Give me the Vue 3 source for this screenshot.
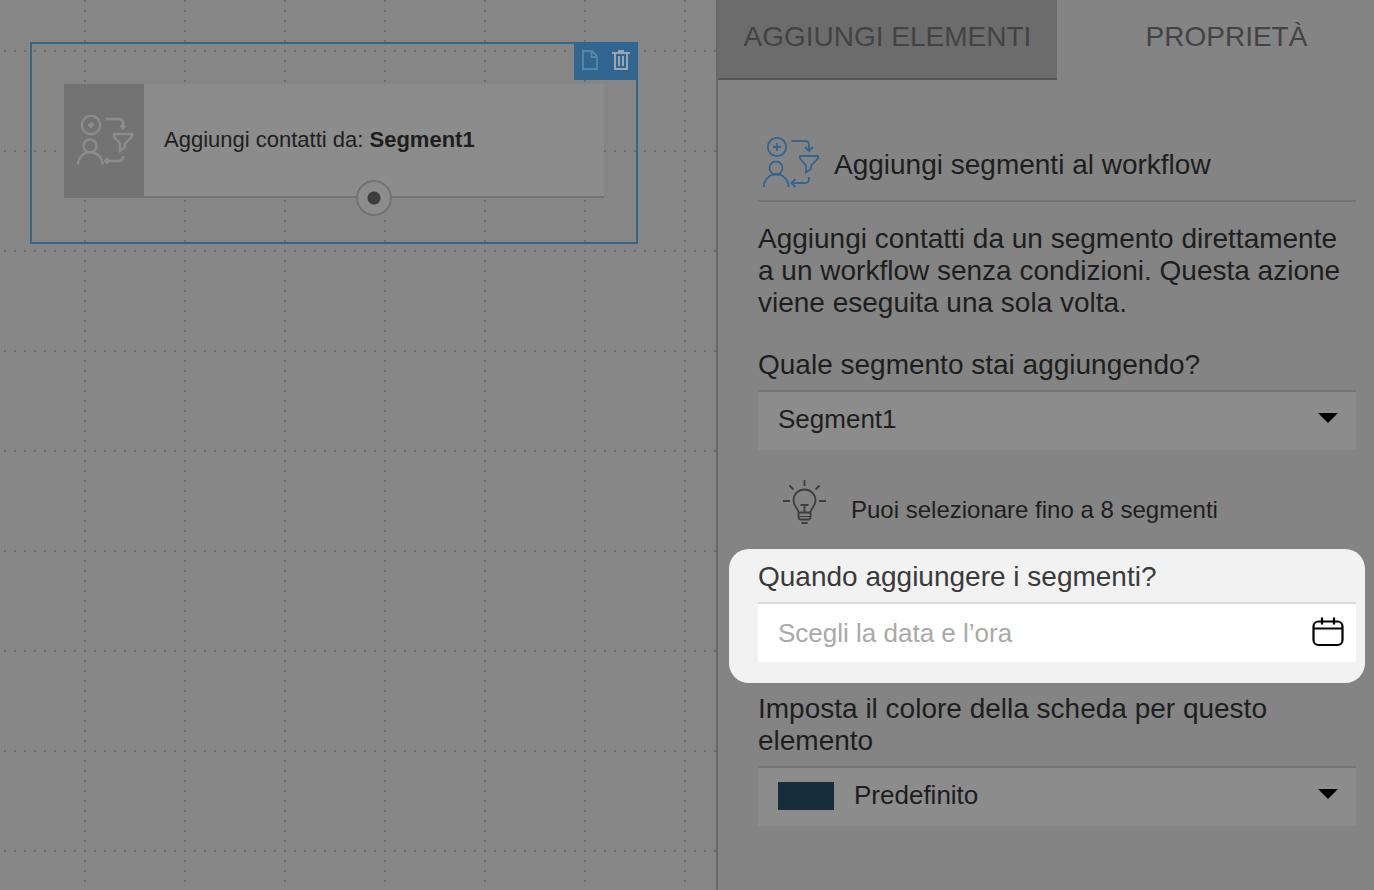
<script setup>
import { ref } from 'vue'

const segment = ref('Segment1')
const color = ref('Predefinito')
const date = ref('')
</script>

<template>
  <div class="editor">
    <main class="canvas">
      <svg class="dots" width="100%" height="100%" aria-hidden="true">
        <defs>
          <pattern id="grid-dots" width="100" height="100" patternUnits="userSpaceOnUse" x="80" y="46">
            <path d="M5 5h.01M15 5h.01M25 5h.01M35 5h.01M45 5h.01M55 5h.01M65 5h.01M75 5h.01M85 5h.01M95 5h.01M5 15h.01M5 25h.01M5 35h.01M5 45h.01M5 55h.01M5 65h.01M5 75h.01M5 85h.01M5 95h.01" stroke="#646464" stroke-width="2.2" stroke-linecap="round" />
          </pattern>
        </defs>
        <rect width="100%" height="100%" fill="url(#grid-dots)" />
      </svg>

      <section class="node">
        <div class="node-tools">
          <button type="button" aria-label="Duplica">
            <svg width="16" height="20" viewBox="0 0 16 20" fill="none" stroke="#5c86a3" stroke-width="1.8">
              <path d="M1 1h9l5 5.500V19H1z" /><path d="M9.500 1v6H15" />
            </svg>
          </button>
          <button type="button" aria-label="Elimina">
            <svg width="18" height="20" viewBox="0 0 18 20" fill="none" stroke="#9aa5ad" stroke-width="2">
              <path d="M0 3h18M6 1h6M3 3v16h12V3M7 6v10M11 6v10" />
            </svg>
          </button>
        </div>
        <div class="card">
          <div class="card-icon">
            <svg width="58" height="52" viewBox="0 0 58 52" fill="none" stroke="#8c8c8c" stroke-width="2.4">
              <circle cx="14" cy="10" r="9.200" />
              <path d="M14 7l3 3-3 3-3-3z" fill="#8c8c8c" stroke-width="1" />
              <path d="M29 4h13q4 0 4 4v3" />
              <path d="M46 14.500l-3-3 3-2 3 2z" fill="#8c8c8c" stroke-width="1" />
              <path d="M37 19h18v2.500l-7 7v3.500l-5 4v-7.500l-6-7z" />
              <path d="M46 41v1q0 4-4 4H31" />
              <path d="M27 46l3.500-3 2.500 3-2.500 3z" fill="#8c8c8c" stroke-width="1" />
              <circle cx="13" cy="31" r="6.500" />
              <path d="M1 49.500a12.200 12.200 0 0 1 24.500 0" />
            </svg>
          </div>
          <div class="card-body">
            <p>Aggiungi contatti da: <strong>Segment1</strong></p>
            <span class="port"></span>
          </div>
        </div>
      </section>
    </main>

    <aside class="panel">
      <nav class="tabs">
        <button type="button" class="tab tab-add">AGGIUNGI ELEMENTI</button>
        <button type="button" class="tab tab-props">PROPRIETÀ</button>
      </nav>

      <form class="props" @submit.prevent>
        <header class="title">
          <svg width="58" height="52" viewBox="0 0 58 52" fill="none" stroke="#30668f" stroke-width="1.8" aria-hidden="true">
            <circle cx="14" cy="10" r="9.200" />
            <path d="M14 6v8M10 10h8" />
            <path d="M28.500 4H42q4 0 4 4v5.500M42 10l4 4 4-4" />
            <path d="M37 19h18v2.500l-7 7v3.500l-5 3.500v-7l-6-7z" />
            <path d="M46 40v2q0 4-4 4H29M32.500 42l-4 4 4 4" />
            <circle cx="13" cy="31" r="6.500" />
            <path d="M1 50v-.5a12.200 12.200 0 0 1 24.500 0v.5" />
          </svg>
          <h1>Aggiungi segmenti al workflow</h1>
        </header>

        <p class="intro">Aggiungi contatti da un segmento direttamente a un workflow senza condizioni. Questa azione viene eseguita una sola volta.</p>

        <label for="segment">Quale segmento stai aggiungendo?</label>
        <div class="field">
          <select id="segment" v-model="segment">
            <option>Segment1</option>
          </select>
          <svg class="caret" width="20" height="10" viewBox="0 0 20 10" aria-hidden="true"><path d="M0 0h20L10 10z" /></svg>
        </div>

        <div class="hint">
          <svg width="44" height="44" viewBox="0 0 44 44" fill="none" stroke="#3d3d3d" stroke-width="1.8" aria-hidden="true">
            <path d="M21.500 0v6M6.500 5.500l4 4M36.500 5.500l-4 4M0 21h7M36 21h7" />
            <path d="M15.500 37v-4.500c0-4-5-6-5-12a11 11 0 0 1 22 0c0 6-5 8-5 12V37q0 2.500-2.500 2.500h-7q-2.500 0-2.500-2.500z" />
            <path d="M15.500 32.500h12M17.500 25h8M21.500 25v7M18.500 43h6" />
            <path d="M16 36.500h11" stroke-width="1" />
          </svg>
          <p>Puoi selezionare fino a 8 segmenti</p>
        </div>

        <div class="spotlight">
          <label for="date">Quando aggiungere i segmenti?</label>
          <div class="field">
            <input id="date" v-model="date" type="text" placeholder="Scegli la data e l’ora" />
            <svg class="calendar" width="32" height="30" viewBox="0 0 32 30" fill="none" stroke="#000" stroke-width="2.2" aria-hidden="true">
              <rect x="1.500" y="4.500" width="29" height="23.500" rx="5" />
              <path d="M1.500 11.500h29M10 .5v7M22 .5v7" />
            </svg>
          </div>
        </div>

        <label for="color">Imposta il colore della scheda per questo elemento</label>
        <div class="field">
          <select id="color" v-model="color" class="with-swatch">
            <option>Predefinito</option>
          </select>
          <span class="swatch"></span>
          <svg class="caret" width="20" height="10" viewBox="0 0 20 10" aria-hidden="true"><path d="M0 0h20L10 10z" /></svg>
        </div>
      </form>
    </aside>
  </div>
</template>

<style>
body {
  margin: 0;
  background: #848484;
}
</style>

<style scoped>
.editor {
  display: grid;
  grid-template-columns: 358fr 329fr;
  min-height: 100vh;
  color: #1e1e1e;
  font-family: "Liberation Sans", Arial, sans-serif;
}
.editor * {
  box-sizing: border-box;
}
p,
h1 {
  margin: 0;
}
button,
input,
select {
  border: 0;
  margin: 0;
  padding: 0;
  background: none;
  color: inherit;
  font: inherit;
}
svg {
  display: block;
  flex: none;
}

.canvas {
  position: relative;
  padding: 42px 78px 42px 30px;
  background: #868686;
}
.dots {
  position: absolute;
  inset: 0;
}
.node {
  position: relative;
  padding: 40px 32px 44px;
  border: 2px solid #33668c;
}
.node-tools {
  position: absolute;
  top: -2px;
  right: -2px;
  display: flex;
  align-items: center;
  gap: 14px;
  height: 38px;
  padding: 0 8px 2px;
  background: #30668f;
}
.card {
  display: flex;
  height: 114px;
}
.card-icon {
  display: flex;
  align-items: center;
  flex: none;
  width: 80px;
  padding-left: 13px;
  background: #737373;
}
.card-body {
  position: relative;
  display: flex;
  align-items: center;
  flex: 1;
  padding-left: 20px;
  border-bottom: 2px solid #737373;
  background: #8c8c8c;
  font-size: 22px;
}
.port {
  position: absolute;
  left: 50%;
  bottom: -20px;
  width: 36px;
  height: 36px;
  margin-left: -18px;
  border: 2px solid #737373;
  border-radius: 50%;
  background: radial-gradient(circle, #3c3c3c 6px, #8c8c8c 7px);
}

.panel {
  border-left: 2px solid #686868;
  background: #848484;
}
.tabs {
  display: grid;
  grid-template-columns: 339fr 317fr;
  height: 80px;
}
.tab {
  padding-bottom: 6px;
  color: #434343;
  font-size: 28px;
}
.tab-add {
  padding-bottom: 4px;
  border-bottom: 2px solid #585858;
  background: #6c6c6c;
}
.tab-props {
  padding-left: 22px;
}
.props {
  padding: 56px 18px 40px 40px;
  font-size: 28px;
  line-height: 32px;
}
.title {
  display: flex;
  align-items: center;
  gap: 13px;
  height: 66px;
  padding: 0 0 10px 5px;
  border-bottom: 2px solid #737373;
}
.title h1 {
  padding-top: 4px;
  font-size: 28px;
  font-weight: 400;
}
.intro {
  margin: 21px 0 30px;
}
label {
  display: block;
  margin-bottom: 9px;
}
.field {
  display: grid;
  align-items: center;
  height: 60px;
  border-top: 2px solid #757575;
  background: #8c8c8c;
  font-size: 26px;
}
.field > * {
  grid-area: 1 / 1;
}
.field select,
.field input {
  width: 100%;
  height: 100%;
  padding: 0 56px 4px 20px;
  appearance: none;
  outline: none;
}
.field select.with-swatch {
  padding-left: 96px;
}
.swatch {
  width: 56px;
  height: 28px;
  margin: 0 0 2px 20px;
  background: #162d3b;
  pointer-events: none;
}
.caret {
  justify-self: end;
  margin: 0 18px 6px 0;
  pointer-events: none;
}
.hint {
  display: flex;
  align-items: center;
  gap: 24px;
  height: 99px;
  padding: 4px 0 0 25px;
  font-size: 24px;
}
.hint p {
  padding-top: 16px;
}
.spotlight {
  margin: 0 -9px 10px -29px;
  padding: 12px 9px 21px 29px;
  border-radius: 20px;
  background: #f2f2f2;
  color: #3a3a3a;
}
.spotlight .field {
  border-top-color: #d9d9d9;
  background: #fff;
}
.spotlight input {
  padding-bottom: 0;
}
.spotlight input::placeholder {
  color: #a9a9a9;
  opacity: 1;
}
.calendar {
  justify-self: end;
  margin: 0 12px 2px 0;
  pointer-events: none;
}
</style>
